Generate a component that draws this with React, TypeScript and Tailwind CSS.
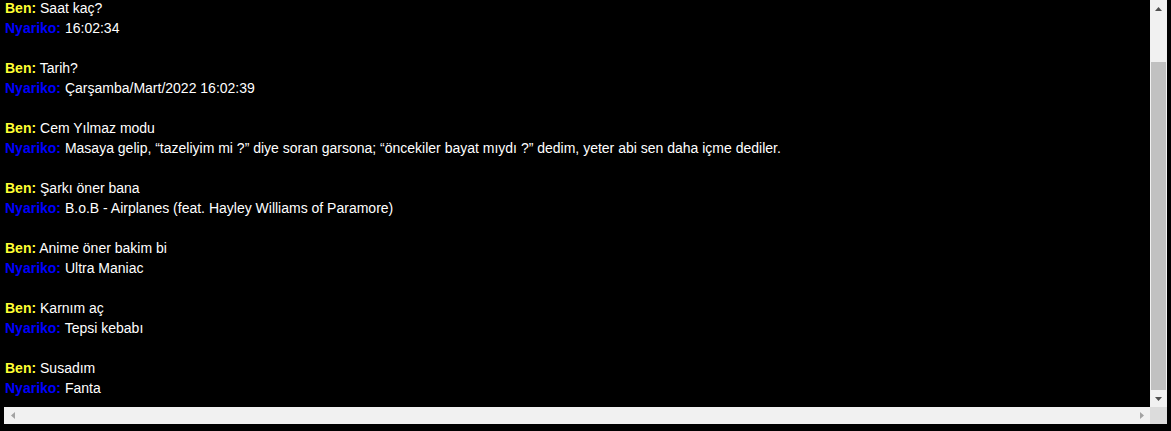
import React from "react";

const msgs: [string, string][] = [
  ["Saat kaç?", "16:02:34"],
  ["Tarih?", "Çarşamba/Mart/2022 16:02:39"],
  ["Cem Yılmaz modu", "Masaya gelip, “tazeliyim mi ?” diye soran garsona; “öncekiler bayat mıydı ?” dedim, yeter abi sen daha içme dediler."],
  ["Şarkı öner bana", "B.o.B - Airplanes (feat. Hayley Williams of Paramore)"],
  ["Anime öner bakim bi", "Ultra Maniac"],
  ["Karnım aç", "Tepsi kebabı"],
  ["Susadım", "Fanta"],
];

function Tri({ dir, color }: { dir: "up" | "down" | "left" | "right"; color: string }) {
  const pts =
    dir === "up"
      ? "0,4 3.5,0 7,4"
      : dir === "down"
      ? "0,0 7,0 3.5,4"
      : dir === "left"
      ? "4,0 4,7 0,3.5"
      : "0,0 0,7 4,3.5";
  const w = dir === "up" || dir === "down" ? 7 : 4;
  const h = dir === "up" || dir === "down" ? 4 : 7;
  return (
    <svg width={w} height={h} viewBox={`0 0 ${w} ${h}`}>
      <polygon points={pts} fill={color} />
    </svg>
  );
}

export default function App() {
  return (
    <div className="w-[1171px] h-[431px] bg-black overflow-hidden" style={{ fontFamily: '"Liberation Sans", Arial, sans-serif' }}>
      <div className="ml-[4px] w-[1163px] h-[424px] grid grid-cols-[1146px_17px] grid-rows-[407px_17px]">
        <div className="-ml-[4px] w-[1150px] flex flex-col justify-end overflow-hidden pl-[5px] pb-[9px] text-[14px] leading-[20px] text-white whitespace-nowrap">
          {msgs.map(([q, a], i) => (
            <div key={i}>
              {i > 0 && <div className="h-[20px]" />}
              <div>
                <span className="font-bold text-[#ffff33]">Ben:</span> {q}
              </div>
              <div>
                <span className="font-bold text-[#0000ff]">Nyariko:</span> {a}
              </div>
            </div>
          ))}
        </div>
        <div className="bg-[#f1f1f1] flex flex-col items-center">
          <div className="h-[17px] w-full flex items-center justify-center">
            <Tri dir="up" color="#505050" />
          </div>
          <div className="flex-1 w-full px-[1px] pt-[45px]">
            <div className="h-[328px] bg-[#c1c1c1]" />
          </div>
          <div className="h-[17px] w-full flex items-center justify-center">
            <Tri dir="down" color="#505050" />
          </div>
        </div>
        <div className="bg-[#f1f1f1] flex items-center justify-between">
          <div className="w-[17px] h-full flex items-center justify-center">
            <Tri dir="left" color="#a3a3a3" />
          </div>
          <div className="w-[17px] h-full flex items-center justify-center">
            <Tri dir="right" color="#a3a3a3" />
          </div>
        </div>
        <div className="bg-[#dcdcdc]" />
      </div>
    </div>
  );
}
